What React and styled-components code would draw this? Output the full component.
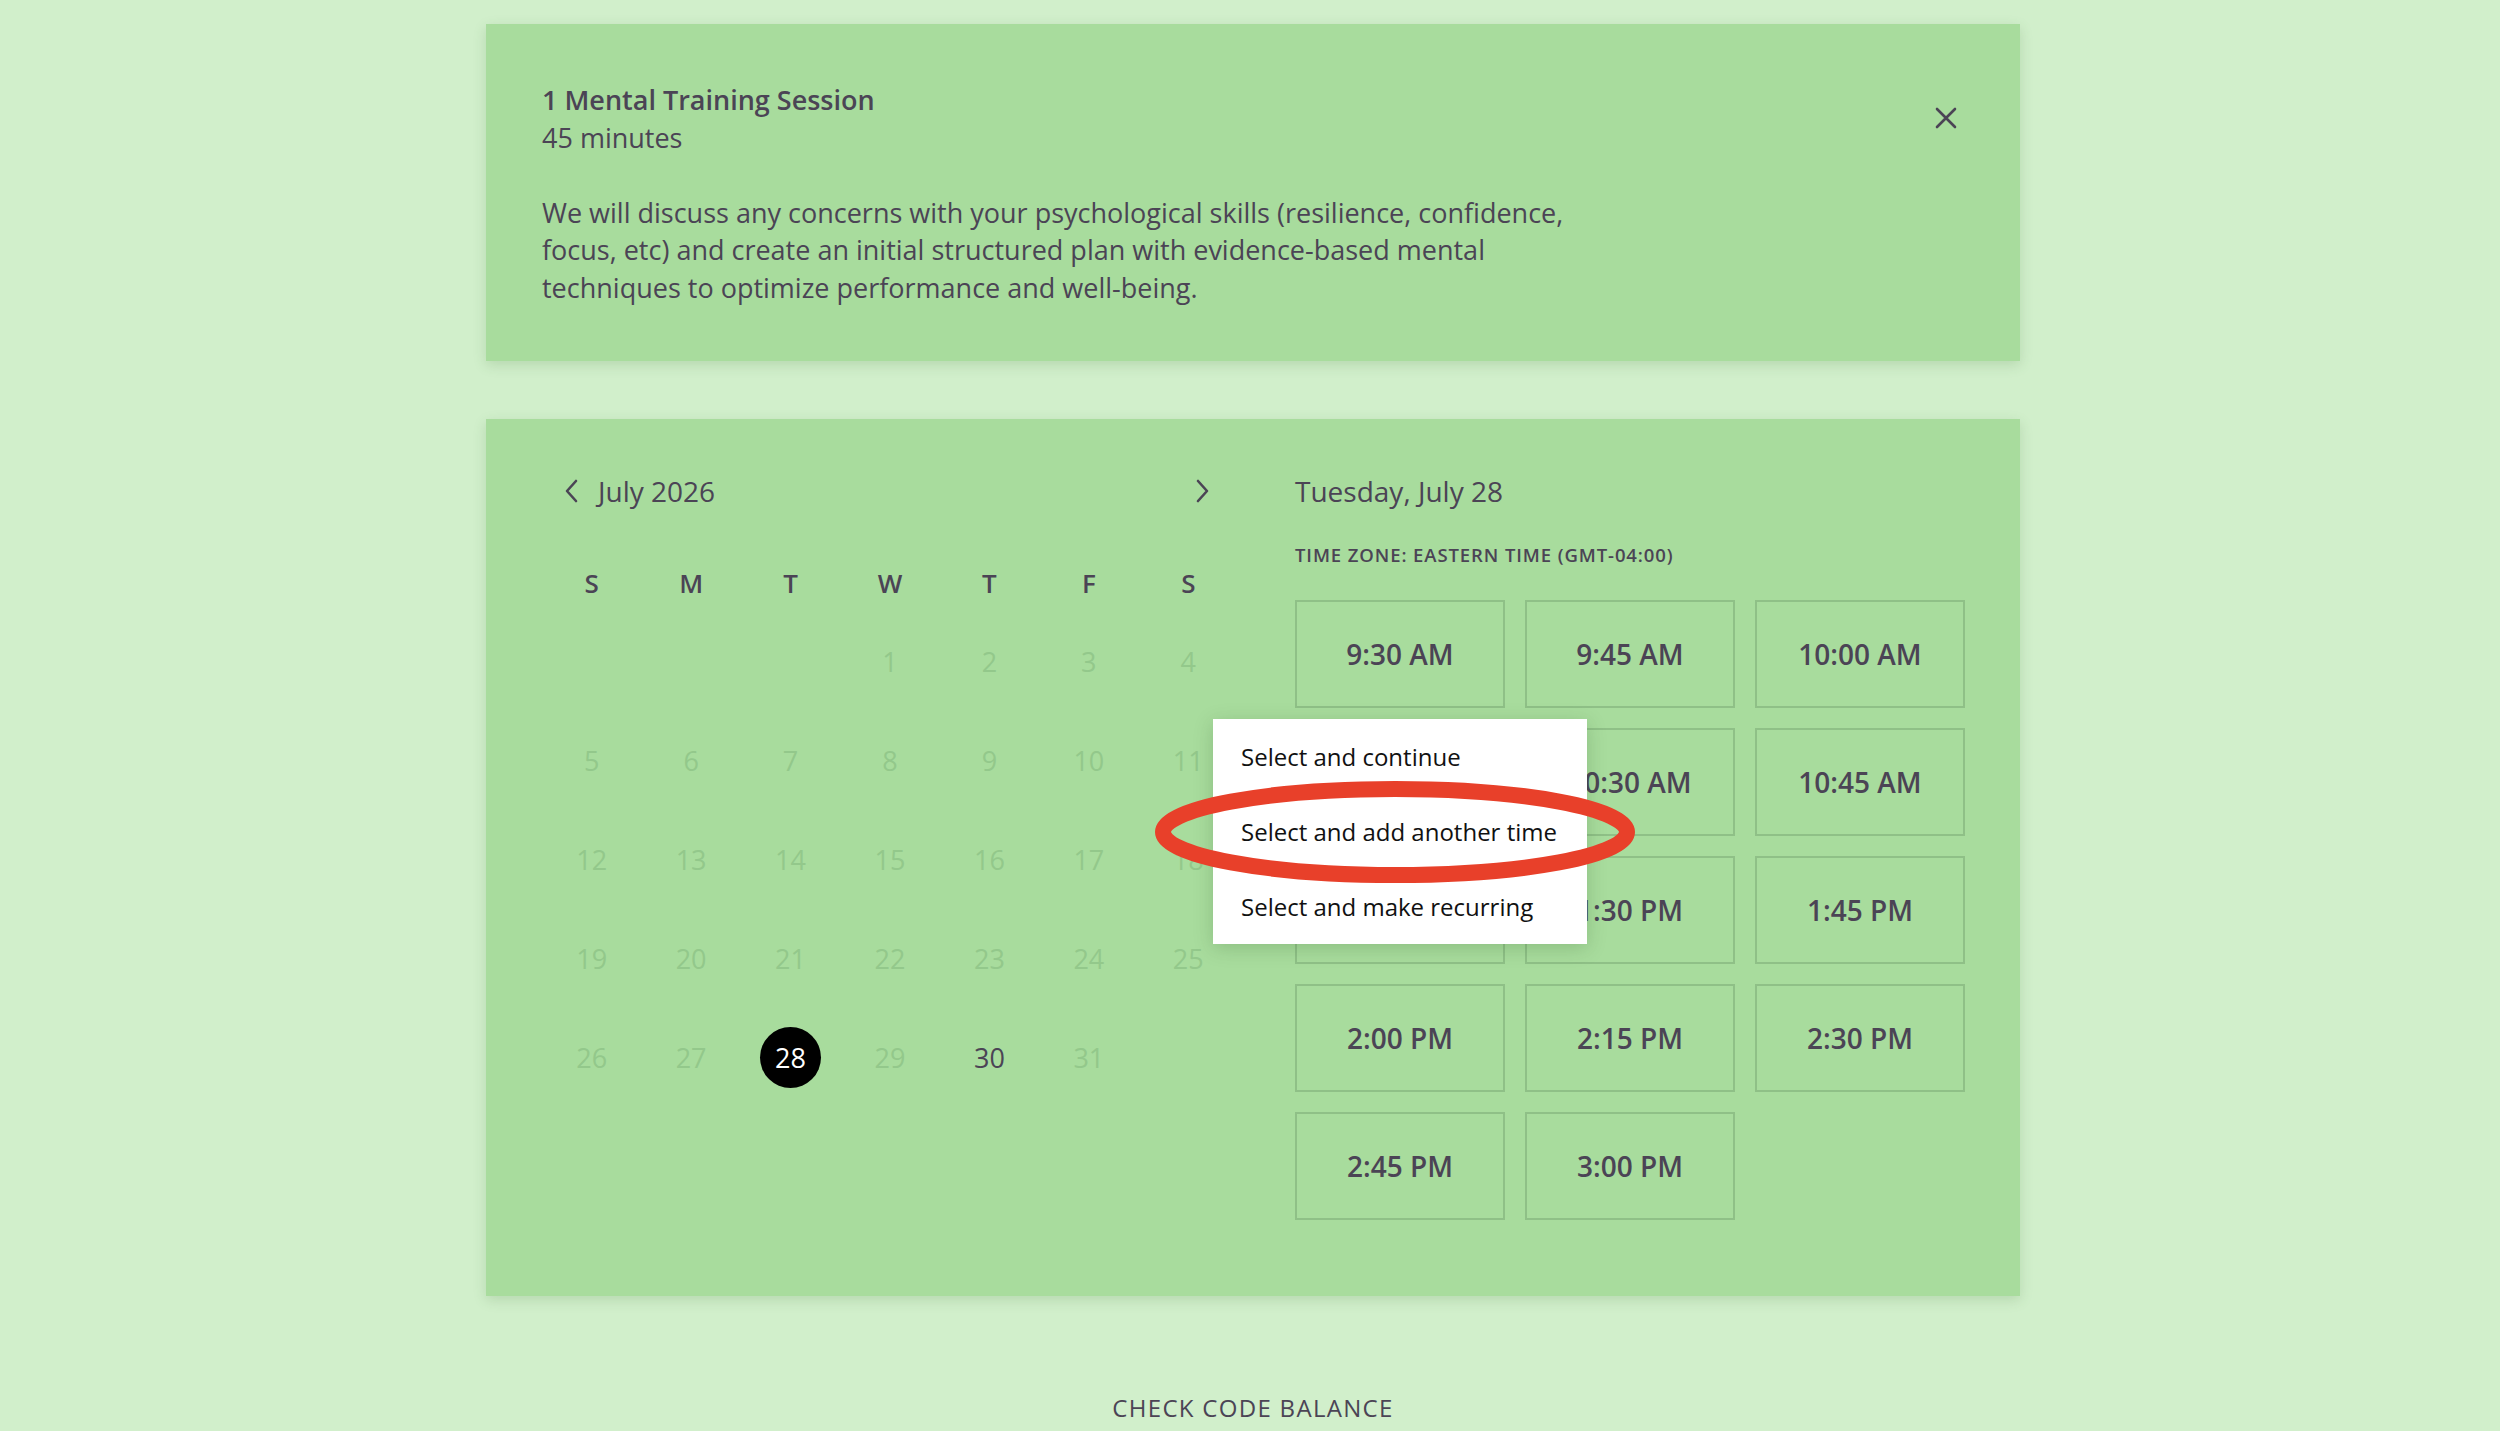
import styled, { createGlobalStyle } from "styled-components";

const GlobalStyle = createGlobalStyle`
  body {
    margin: 0;
    background: #d1efcb;
    font-family: "Open Sans", "Liberation Sans", sans-serif;
    color: #4b4455;
  }
  * {
    box-sizing: border-box;
  }
`;

const Page = styled.div`
  width: 1534px;
  margin: 0 0 0 calc(50% - 764px);
  padding: 24px 0 40px;
  display: flex;
  flex-direction: column;
`;

const Card = styled.section`
  background: #a8dc9d;
  box-shadow: 0 4px 12px rgba(60, 110, 50, 0.18);
`;

const InfoCard = styled(Card)`
  display: flex;
  justify-content: space-between;
  align-items: flex-start;
  padding: 57px 56px 55px;
`;

const InfoText = styled.div`
  max-width: 1070px;
  font-size: 27px;
  line-height: 37.5px;
`;

const Title = styled.h2`
  margin: 0;
  font-size: 27px;
  font-weight: 600;
`;

const Duration = styled.div`
  margin-bottom: 37.5px;
`;

const Description = styled.p`
  margin: 0;
`;

const CloseButton = styled.button`
  margin: 26px 7px 0 0;
  padding: 0;
  border: 0;
  background: none;
  width: 22px;
  height: 22px;
  color: #4b4455;
  cursor: pointer;
  display: flex;
`;

const BookingCard = styled(Card)`
  position: relative;
  margin-top: 58px;
  display: grid;
  grid-template-columns: 696px 670px;
  column-gap: 57px;
  align-items: start;
  padding: 52px 55px 76px 56px;
`;

const MonthBar = styled.div`
  height: 40px;
  display: flex;
  align-items: center;
  padding: 0 27px 0 21px;
`;

const NavButton = styled.button`
  padding: 0;
  border: 0;
  background: none;
  color: #4b4455;
  display: flex;
  cursor: pointer;
  margin-left: ${(p) => (p.$next ? "auto" : "0")};
`;

const MonthLabel = styled.span`
  margin-left: 19px;
  font-size: 28px;
`;

const WeekGrid = styled.div`
  margin-top: 43px;
  display: grid;
  grid-template-columns: repeat(7, 1fr);
  grid-template-rows: 58px;
  grid-auto-rows: 99px;
`;

const WeekDay = styled.div`
  display: flex;
  align-items: center;
  justify-content: center;
  font-size: 26px;
  font-weight: 600;
`;

const DayCell = styled.div`
  display: flex;
  align-items: center;
  justify-content: center;
`;

const DayNumber = styled.span`
  width: 61px;
  height: 61px;
  border-radius: 50%;
  display: flex;
  align-items: center;
  justify-content: center;
  font-size: 27px;
  color: ${(p) =>
    p.$selected ? "#ffffff" : p.$available ? "#4b4455" : "#93c88b"};
  background: ${(p) => (p.$selected ? "#000000" : "transparent")};
`;

const TimesColumn = styled.div`
  display: flex;
  flex-direction: column;
`;

const DateTitle = styled.div`
  height: 40px;
  display: flex;
  align-items: center;
  font-size: 28px;
`;

const TimeZone = styled.div`
  margin-top: 30px;
  height: 26px;
  display: flex;
  align-items: center;
  font-size: 18.5px;
  font-weight: 600;
  letter-spacing: 0.9px;
`;

const SlotGrid = styled.div`
  margin-top: 33px;
  display: grid;
  grid-template-columns: repeat(3, 210px);
  grid-auto-rows: 108px;
  gap: 20px;
`;

const Slot = styled.div`
  position: relative;
  border: 2px solid #8fc087;
  display: flex;
  align-items: center;
  justify-content: center;
  font-size: 28px;
  font-weight: 600;
`;

const SlotMenu = styled.ul`
  position: absolute;
  left: -84px;
  top: -11px;
  z-index: 5;
  width: 374px;
  margin: 0;
  padding: 0;
  list-style: none;
  background: #ffffff;
  box-shadow: 0 4px 18px rgba(40, 80, 30, 0.22);
`;

const MenuItem = styled.li`
  height: 75px;
  padding: 0 28px;
  display: flex;
  align-items: center;
  font-size: 24px;
  font-weight: 500;
  color: #111111;
  white-space: nowrap;
`;

const Highlight = styled.svg`
  position: absolute;
  left: -58px;
  top: 62px;
  pointer-events: none;
`;

const FooterLink = styled.a`
  margin-top: 95px;
  align-self: center;
  font-size: 24px;
  letter-spacing: 1.3px;
  color: #4b4455;
  text-decoration: none;
`;

const weekDays = ["S", "M", "T", "W", "T", "F", "S"];
const firstWeekday = 3;
const daysInMonth = 31;
const selectedDay = 28;
const availableDays = [28, 30];

const times = [
  "9:30 AM",
  "9:45 AM",
  "10:00 AM",
  "10:15 AM",
  "10:30 AM",
  "10:45 AM",
  "1:15 PM",
  "1:30 PM",
  "1:45 PM",
  "2:00 PM",
  "2:15 PM",
  "2:30 PM",
  "2:45 PM",
  "3:00 PM",
];
const openSlot = "10:15 AM";

function Chevron({ dir }) {
  const points = dir === "left" ? "13,2 4,12 13,22" : "3,2 12,12 3,22";
  return (
    <svg width="16" height="24" viewBox="0 0 16 24">
      <polyline
        points={points}
        fill="none"
        stroke="currentColor"
        strokeWidth="2.6"
        strokeLinecap="round"
        strokeLinejoin="round"
      />
    </svg>
  );
}

function SlotActions() {
  return (
    <SlotMenu>
      <MenuItem>Select and continue</MenuItem>
      <MenuItem>Select and add another time</MenuItem>
      <MenuItem>Select and make recurring</MenuItem>
      <Highlight width="480" height="104" viewBox="0 0 480 104">
        <ellipse
          cx="240"
          cy="51"
          rx="232"
          ry="43"
          fill="none"
          stroke="#e8402a"
          strokeWidth="16"
        />
      </Highlight>
    </SlotMenu>
  );
}

export default function App() {
  const cells = [];
  for (let i = 0; i < firstWeekday; i++) cells.push(null);
  for (let d = 1; d <= daysInMonth; d++) cells.push(d);

  return (
    <>
      <GlobalStyle />
      <Page>
        <InfoCard>
          <InfoText>
            <Title>1 Mental Training Session</Title>
            <Duration>45 minutes</Duration>
            <Description>
              We will discuss any concerns with your psychological skills
              (resilience, confidence, focus, etc) and create an initial
              structured plan with evidence-based mental techniques to optimize
              performance and well-being.
            </Description>
          </InfoText>
          <CloseButton aria-label="Close">
            <svg width="22" height="22" viewBox="0 0 22 22">
              <path
                d="M2 2 L20 20 M20 2 L2 20"
                stroke="currentColor"
                strokeWidth="2.6"
                strokeLinecap="round"
              />
            </svg>
          </CloseButton>
        </InfoCard>

        <BookingCard>
          <div>
            <MonthBar>
              <NavButton aria-label="Previous month">
                <Chevron dir="left" />
              </NavButton>
              <MonthLabel>July 2026</MonthLabel>
              <NavButton $next aria-label="Next month">
                <Chevron dir="right" />
              </NavButton>
            </MonthBar>
            <WeekGrid>
              {weekDays.map((d, i) => (
                <WeekDay key={i}>{d}</WeekDay>
              ))}
              {cells.map((d, i) => (
                <DayCell key={i}>
                  {d && (
                    <DayNumber
                      $selected={d === selectedDay}
                      $available={availableDays.includes(d)}
                    >
                      {d}
                    </DayNumber>
                  )}
                </DayCell>
              ))}
            </WeekGrid>
          </div>

          <TimesColumn>
            <DateTitle>Tuesday, July 28</DateTitle>
            <TimeZone>TIME ZONE: EASTERN TIME (GMT-04:00)</TimeZone>
            <SlotGrid>
              {times.map((t) => (
                <Slot key={t}>
                  {t}
                  {t === openSlot && <SlotActions />}
                </Slot>
              ))}
            </SlotGrid>
          </TimesColumn>
        </BookingCard>

        <FooterLink href="#">CHECK CODE BALANCE</FooterLink>
      </Page>
    </>
  );
}
